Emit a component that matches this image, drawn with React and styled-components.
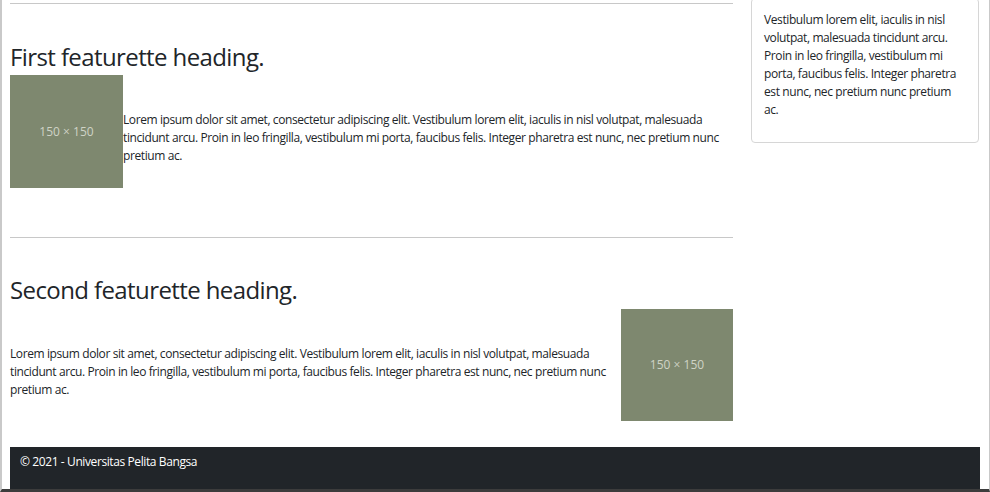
import React from 'react';
import styled, { createGlobalStyle } from 'styled-components';

const GlobalStyle = createGlobalStyle`
    html, body {
        margin: 0;
        padding: 0;
        background: #fff;
    }
    body {
        font-family: "Open Sans", "Noto Sans", sans-serif;
        font-size: 12px;
        line-height: 18px;
        letter-spacing: -0.4px;
        color: #212529;
    }
`;

const Frame = styled.div`
    box-sizing: border-box;
    width: 990px;
    height: 492px;
    overflow: hidden;
    border-left: 2px solid #c9c9c9;
    border-right: 1px solid #c9c9c9;
    border-bottom: 3px solid #3c3c3c;
    padding: 0 8px;
`;

const Container = styled.div`
    display: flex;
    gap: 18px;
    width: 969px;
`;

const Main = styled.main`
    width: 723px;
    flex: none;
`;

const Aside = styled.aside`
    width: 228px;
    flex: none;
`;

const Divider = styled.hr`
    margin: ${p => p.$top}px 0 0;
    border: 0;
    border-top: 1px solid #c8c8c8;
`;

const Heading = styled.h2`
    margin: ${p => p.$top}px 0 ${p => p.$bottom}px;
    font-size: 24px;
    font-weight: 400;
    line-height: 29px;
    letter-spacing: -0.6px;
`;

const Featurette = styled.div`
    display: flex;
    align-items: center;
`;

const Placeholder = styled.div`
    flex: none;
    width: ${p => p.$w}px;
    height: ${p => p.$h}px;
    background: #7e886f;
    color: #cfd3c6;
    font-size: 12px;
    letter-spacing: 0;
    display: flex;
    align-items: center;
    justify-content: center;
`;

const Lead = styled.p`
    margin: 13px 0 0;
    flex: 1;
`;

const Card = styled.div`
    margin-top: -2px;
    border: 1px solid #d6d6d6;
    border-radius: 4px;
    padding: 12px 12px 11px;
`;

const CardText = styled.p`
    margin: 0 0 12px;
`;

const Footer = styled.footer`
    margin-top: 26px;
    width: 970px;
    height: 42px;
    box-sizing: border-box;
    background: #212529;
    color: #fff;
    padding: 6px 10px;
`;

const LOREM = 'Lorem ipsum dolor sit amet, consectetur adipiscing elit. Vestibulum lorem elit, iaculis in nisl volutpat, malesuada tincidunt arcu. Proin in leo fringilla, vestibulum mi porta, faucibus felis. Integer pharetra est nunc, nec pretium nunc pretium ac.';

export default function App() {
    return (
        <>
            <GlobalStyle />
            <Frame>
                <Container>
                    <Main>
                        <Divider $top={3} />
                        <Heading $top={38} $bottom={4}>First featurette heading.</Heading>
                        <Featurette>
                            <Placeholder $w={113} $h={113}>150 × 150</Placeholder>
                            <Lead>{LOREM}</Lead>
                        </Featurette>

                        <Divider $top={49} />
                        <Heading $top={37} $bottom={5}>Second featurette heading.</Heading>
                        <Featurette>
                            <Lead>{LOREM}</Lead>
                            <Placeholder $w={112} $h={112}>150 × 150</Placeholder>
                        </Featurette>
                    </Main>
                    <Aside>
                        <Card>
                            <CardText>
                                Vestibulum lorem elit, iaculis in nisl volutpat, malesuada tincidunt arcu. Proin in leo fringilla, vestibulum mi porta, faucibus felis. Integer pharetra est nunc, nec pretium nunc pretium ac.
                            </CardText>
                        </Card>
                    </Aside>
                </Container>
                <Footer>© 2021 - Universitas Pelita Bangsa</Footer>
            </Frame>
        </>
    );
}
